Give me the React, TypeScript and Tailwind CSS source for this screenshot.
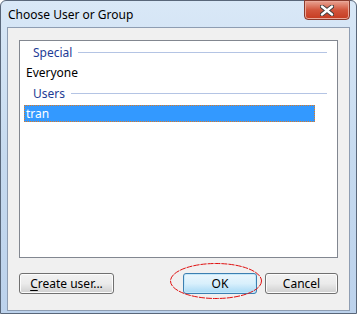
const font = { fontFamily: '"Segoe UI", "Noto Sans", "Open Sans", sans-serif' };

function GroupHeader({ label }: { label: string }) {
  return (
    <div className="flex h-[21px] items-center pl-[13px] pr-[10px]">
      <span className="text-[12px] leading-none text-[#1e3c96]">{label}</span>
      <div className="ml-[6px] h-px flex-1 bg-[#b4c4e4]" />
    </div>
  );
}

function Button({ label, mnemonic, focused, width }: { label: string; mnemonic?: boolean; focused?: boolean; width: string }) {
  const base = 'flex h-[21px] items-center justify-center rounded-[3px] border text-[12px] leading-none text-black';
  const look = focused
    ? 'border-[#3c7fb1] bg-gradient-to-b from-[#eaf6fd] via-[#d9f0fc] to-[#a7d9f5] shadow-[inset_0_0_0_1px_#c4e8fa]'
    : 'border-[#707070] bg-gradient-to-b from-[#f2f2f2] via-[#ebebeb] to-[#cfcfcf] shadow-[inset_0_0_0_1px_#fcfcfc]';
  return (
    <div className={`${base} ${look} ${width}`}>
      {mnemonic ? (
        <span>
          <span className="underline underline-offset-2">{label[0]}</span>
          {label.slice(1)}
        </span>
      ) : (
        label
      )}
    </div>
  );
}

export default function App() {
  return (
    <div className="h-[314px] w-[357px] bg-white" style={font}>
      <div className="relative flex h-full w-full flex-col rounded-t-[6px] border border-[#59677a] bg-gradient-to-b from-[#d9e8f7] via-[#c6daef] to-[#bcd2ec] px-[6px] pb-[2px]">
        {/* title bar */}
        <div className="flex h-[26px] items-center pl-[1px] pt-[2px]">
          <span className="text-[12px] leading-none text-black">Choose User or Group</span>
        </div>

        {/* close button */}
        <div className="absolute right-[6px] top-[-1px] flex h-[20px] w-[46px] items-center justify-center rounded-b-[4px] border border-[#8a3a2c] bg-gradient-to-b from-[#e8a393] via-[#d2553c] to-[#c63a1f] shadow-[inset_0_0_0_1px_#eaa899]">
          <svg width="14" height="11" viewBox="0 0 14 11">
            <path d="M2 1.5 L12 9.5 M12 1.5 L2 9.5" stroke="#3b3b3b" strokeWidth="4.2" strokeLinecap="round" />
            <path d="M2 1.5 L12 9.5 M12 1.5 L2 9.5" stroke="#ffffff" strokeWidth="2.4" strokeLinecap="round" />
          </svg>
        </div>

        {/* client area */}
        <div className="flex flex-1 flex-col border border-[#8e9db2] bg-[#f0f0f0] px-[11px] pb-[16px] pt-[12px]">
          <div className="flex flex-1 flex-col border border-[#828790] bg-white pt-[1px]">
            <GroupHeader label="Special" />
            <div className="flex h-[20px] items-center pl-[6px] text-[12px] leading-none text-black">Everyone</div>
            <GroupHeader label="Users" />
            <div className="ml-[4px] mr-[22px] mt-[1px] flex h-[17px] items-center border border-dotted border-[#e07a20] bg-[#3399ff] pl-[1px] text-[12px] leading-none text-white">
              tran
            </div>
          </div>

          <div className="mt-[15px] flex items-center">
            <Button label="Create user..." mnemonic width="w-[95px]" />
            <div className="flex-1" />
            <Button label="OK" focused width="w-[74px]" />
            <div className="w-[8px]" />
            <Button label="Cancel" width="w-[73px]" />
          </div>
        </div>

        {/* red annotation ellipse */}
        <svg className="pointer-events-none absolute left-[168px] top-[260px]" width="96" height="40" viewBox="0 0 96 40">
          <ellipse cx="47" cy="20" rx="45.5" ry="17.5" fill="none" stroke="#e01010" strokeWidth="1" strokeDasharray="6 1" />
        </svg>
      </div>
    </div>
  );
}
